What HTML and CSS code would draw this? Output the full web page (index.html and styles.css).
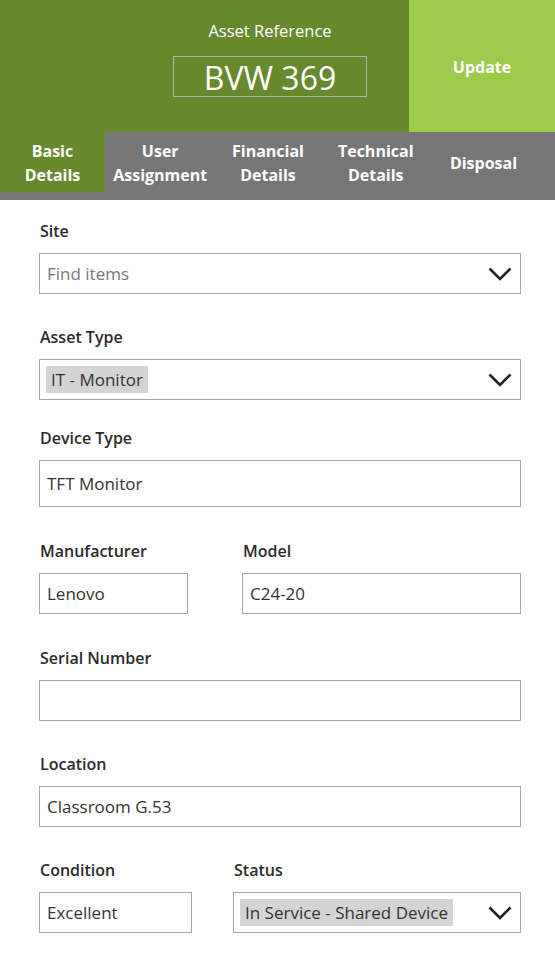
FILE: index.html
```html
<!DOCTYPE html>
<html lang="en">
<head>
<meta charset="utf-8">
<title>Asset BVW 369</title>
<link rel="stylesheet" href="styles.css">
</head>
<body>
<header class="top">
  <div class="ref-area">
    <div class="ref-label">Asset Reference</div>
    <div class="ref-box">BVW 369</div>
  </div>
  <button class="update" type="button">Update</button>
</header>
<nav class="tabs">
  <div class="tab active">Basic<br>Details</div>
  <div class="tab">User<br>Assignment</div>
  <div class="tab">Financial<br>Details</div>
  <div class="tab">Technical<br>Details</div>
  <div class="tab">Disposal</div>
</nav>
<main class="form">
  <div class="field">
    <div class="label">Site</div>
    <div class="box select">
      <span class="placeholder">Find items</span>
      <svg class="chev" width="24" height="14" viewBox="0 0 24 14"><polyline points="1.5,1.5 12,12 22.5,1.5" fill="none" stroke="#222" stroke-width="2.6"/></svg>
    </div>
  </div>
  <div class="field field-tight">
    <div class="label">Asset Type</div>
    <div class="box select">
      <span class="chip">IT - Monitor</span>
      <svg class="chev" width="24" height="14" viewBox="0 0 24 14"><polyline points="1.5,1.5 12,12 22.5,1.5" fill="none" stroke="#222" stroke-width="2.6"/></svg>
    </div>
  </div>
  <div class="field field-wide">
    <div class="label">Device Type</div>
    <div class="box tall">TFT Monitor</div>
  </div>
  <div class="row row-a field-wide">
    <div>
      <div class="label">Manufacturer</div>
      <div class="box">Lenovo</div>
    </div>
    <div>
      <div class="label">Model</div>
      <div class="box">C24-20</div>
    </div>
  </div>
  <div class="field">
    <div class="label">Serial Number</div>
    <div class="box"></div>
  </div>
  <div class="field">
    <div class="label">Location</div>
    <div class="box">Classroom G.53</div>
  </div>
  <div class="row row-b">
    <div>
      <div class="label">Condition</div>
      <div class="box">Excellent</div>
    </div>
    <div>
      <div class="label">Status</div>
      <div class="box select">
        <span class="chip">In Service - Shared Device</span>
        <svg class="chev" width="24" height="14" viewBox="0 0 24 14"><polyline points="1.5,1.5 12,12 22.5,1.5" fill="none" stroke="#222" stroke-width="2.6"/></svg>
      </div>
    </div>
  </div>
</main>
</body>
</html>
```
FILE: styles.css
```css
* { box-sizing: border-box; }
html, body { margin: 0; padding: 0; background: #fff; }
body {
  font-family: "Open Sans", "Noto Sans", "Liberation Sans", sans-serif;
  font-size: 16px;
  color: #333;
}
.top {
  display: flex;
  height: 132px;
}
.ref-area {
  width: 409px;
  background: #67892e;
  display: flex;
  flex-direction: column;
  align-items: center;
  padding-left: 131px;
  padding-top: 20px;
  color: #fff;
}
.ref-label {
  font-size: 16.5px;
  line-height: 22px;
}
.ref-box {
  margin-top: 14px;
  width: 194px;
  height: 41px;
  border: 1px solid #b3b3b3;
  text-align: center;
  font-size: 32px;
  line-height: 38px;
  padding-top: 2px;
}
.update {
  flex: 1;
  background: #9ccb4b;
  border: none;
  color: #fff;
  font-family: inherit;
  font-size: 16px;
  font-weight: 700;
  padding: 2px 0 0;
}
.tabs {
  display: grid;
  grid-template-columns: repeat(5, 105px);
  column-gap: 2.75px;
  height: 68px;
  background: #767676;
  align-items: start;
}
.tab {
  height: 60px;
  display: flex;
  align-items: center;
  justify-content: center;
  text-align: center;
  color: #fff;
  font-weight: 700;
  font-size: 16px;
  line-height: 24px;
  padding-top: 2px;
  white-space: nowrap;
}
.tab.active { background: #67892e; }
.form {
  padding: 20px 34px 0 39px;
}
.field { margin-bottom: 32px; }
.field-tight { margin-bottom: 27px; }
.field-wide { margin-bottom: 33px; }
.label {
  font-weight: 600;
  font-size: 16px;
  line-height: 22px;
  margin-bottom: 11px;
  padding-left: 1px;
  color: #2b2b2b;
}
.box {
  height: 41px;
  border: 1px solid #a6a6a6;
  display: flex;
  align-items: center;
  padding: 1px 7px 0;
  font-size: 17px;
  line-height: 22px;
  color: #333;
  white-space: nowrap;
}
.box.tall { height: 47px; }
.select {
  justify-content: space-between;
  padding: 0 8px 0 6px;
}
.placeholder { color: #777; padding-left: 1px; }
.chip {
  background: #d4d4d4;
  height: 27px;
  line-height: 28px;
  padding: 0 5px;
}
.chev { display: block; flex-shrink: 0; }
.row { display: grid; }
.row-a { grid-template-columns: 149px 1fr; column-gap: 54px; }
.row-b { grid-template-columns: 153px 1fr; column-gap: 41px; }
```
